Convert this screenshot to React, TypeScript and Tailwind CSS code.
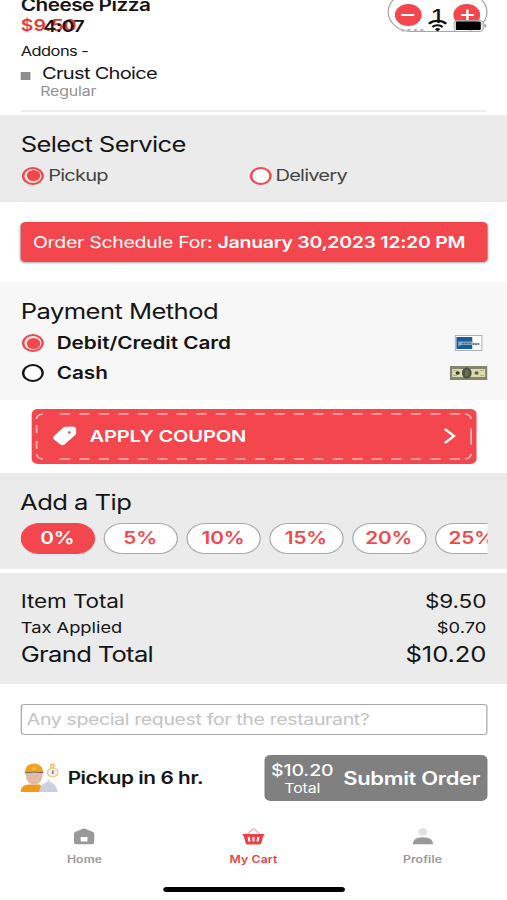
import type { ReactNode } from 'react';

const TIPS = ['0%', '5%', '10%', '15%', '20%', '25%'];

const Radio = ({ checked, dark }: { checked?: boolean; dark?: boolean }) => (
  <span
    className={`ml-px flex h-[18px] w-[18px] shrink-0 items-center justify-center rounded-full border-2 ${
      dark ? 'border-[#151515]' : 'border-[#f4464d]'
    } ${checked ? 'bg-[#fdeaea]' : 'bg-white'}`}
  >
    {checked && <span className="h-[11px] w-[11px] rounded-full bg-[#f4464d]" />}
  </span>
);

const StatusBar = () => (
  <div className="absolute inset-x-0 top-0 h-9">
    <span className="absolute left-[35.500px] top-[16px] text-[16px] font-semibold leading-[20px] tracking-[-0.4px]">4:07</span>
    <svg className="absolute left-[328px] top-[28px]" width="20" height="4" viewBox="0 0 20 4" fill="#b5b5b5">
      <rect x="1" y="1" width="2.500" height="2.500" />
      <rect x="6.300" y="1" width="2.500" height="2.500" />
      <rect x="11.600" y="1" width="2.500" height="2.500" />
      <rect x="16.900" y="1" width="2.500" height="2.500" />
    </svg>
    <svg className="absolute left-[351px] top-[19px]" width="16" height="13" viewBox="0 0 16 13" fill="none" stroke="#0b0b0b" strokeWidth="2">
      <path d="M.9 4.800a10 10 0 0 1 14.200 0" />
      <path d="M3.800 8a6 6 0 0 1 8.400 0" />
      <path d="M8 12.400 5.800 10.200a3.100 3.100 0 0 1 4.400 0Z" fill="#0b0b0b" stroke="none" />
    </svg>
    <svg className="absolute left-[372px] top-[20px]" width="28" height="12" viewBox="0 0 28 12">
      <rect x=".5" y=".5" width="24" height="11" rx="3" fill="#fff" fillOpacity=".5" stroke="#a9a9a9" />
      <rect x="2" y="1.500" width="20.500" height="8.500" rx="1" fill="#000" />
      <path d="M25.500 3.800v4c1-.4 1.500-1.100 1.500-2s-.5-1.600-1.500-2Z" fill="#999" />
    </svg>
  </div>
);

const Stepper = () => (
  <div className="flex h-[40px] w-[82px] items-center justify-between rounded-full border border-[#a5a5a5] px-[4.500px] pt-[6px]">
    <span className="flex h-[22px] w-[22px] items-center justify-center rounded-full bg-[#f4464d]">
      <span className="h-[2px] w-[11px] bg-white" />
    </span>
    <span className="pr-px pt-[2px] text-[19px] font-medium leading-none">1</span>
    <span className="flex h-[22px] w-[22px] items-center justify-center rounded-full bg-[#f4464d]">
      <svg width="11" height="12" viewBox="0 0 11 12" stroke="#fff" strokeWidth="2">
        <path d="M0 6h11M5.500 .5v11" />
      </svg>
    </span>
  </div>
);

const CartItem = () => (
  <div className="flow-root h-[115px] px-[17px]">
    <div className="-mt-1 flex h-[43px] items-start justify-between">
      <div className="font-semibold">
        <div className="h-4 text-[17px] leading-[18px] tracking-[-0.4px]">Cheese Pizza</div>
        <div className="h-[27px] text-[16px] leading-[27px] text-[#ee353c]">$9.50</div>
      </div>
      <div className="-mr-px -mt-1">
        <Stepper />
      </div>
    </div>
    <div className="h-6 text-[13.500px] leading-[25px] tracking-[-0.45px]">Addons -</div>
    <div className="flex h-5 items-center text-[16.500px] tracking-[-0.6px]">
      <span className="mr-[9.500px] mt-[6px] h-[8px] w-[8px] bg-[#8e8e8e]" />
      <span className="pt-px">Crust Choice</span>
    </div>
    <div className="h-[17px] pl-4 text-[13px] leading-[17px] tracking-[-0.1px] text-[#929292]">Regular</div>
    <div className="mt-[10px] h-[2px] bg-[#ececec]" />
  </div>
);

const SelectService = () => (
  <section className="h-[87px] bg-[#ebebeb] px-[17px] pt-[15px]">
    <h2 className="text-[21px] leading-[29px] tracking-[-0.53px]">Select Service</h2>
    <div className="grid h-[33px] grid-cols-2 items-center text-[16.500px] tracking-[-0.650px] text-[#444]">
      <div className="flex items-center gap-[3.500px]">
        <Radio checked />
        <span>Pickup</span>
      </div>
      <div className="-ml-[4.500px] flex items-center gap-[3.500px]">
        <Radio />
        <span>Delivery</span>
      </div>
    </div>
  </section>
);

const AmexCard = () => (
  <svg width="23" height="16" viewBox="0 0 23 16">
    <rect x=".5" y=".5" width="22" height="15" fill="#fff" stroke="#a7b0b5" />
    <path d="M1.500 2h13v12h-13z" fill="#175a9e" />
    <path d="M3 6.500h11.500v3.500H6l-3 1Z" fill="#8facc4" />
    <path d="M6 8.500h8" stroke="#536d82" strokeWidth="1.500" strokeDasharray="2 .6" />
    <path d="M15 9h5.500" stroke="#3c4349" strokeWidth="1.500" strokeDasharray="1.500 .4" />
  </svg>
);

const DollarBill = () => (
  <svg width="31" height="14" viewBox="0 0 31 14">
    <rect width="31" height="14" fill="#85866d" />
    <rect x="2" y="3" width="27" height="8" fill="#dadbb0" />
    <ellipse cx="14" cy="7" rx="4" ry="5.500" fill="#4f5245" />
    <ellipse cx="14" cy="7" rx="1.500" ry="3.500" fill="#6d705c" />
    <circle cx="6.500" cy="7" r="1.700" fill="#343826" />
    <circle cx="22" cy="7" r="1.700" fill="#5d6545" />
    <path d="M3 4.500h3M3 9.500h3M25 4.500h3M25 9.500h3" stroke="#adb17f" />
  </svg>
);

const PaymentRow = ({ label, icon, checked }: { label: string; icon: ReactNode; checked?: boolean }) => (
  <div className="flex h-[30px] items-center text-[17px] font-semibold tracking-[-0.02px]">
    <Radio checked={checked} dark={!checked} />
    <span className="ml-[10.500px] flex-1 pt-[2px]">{label}</span>
    {icon}
  </div>
);

const PaymentMethod = () => (
  <section className="mt-5 h-[118px] bg-[#f7f7f7] px-[17px] pt-[15px]">
    <h2 className="h-[31px] text-[21px] leading-[30px] tracking-[-0.47px]">Payment Method</h2>
    <PaymentRow label="Debit/Credit Card" icon={<span className="mr-[3px]"><AmexCard /></span>} checked />
    <PaymentRow label="Cash" icon={<span className="-mr-px"><DollarBill /></span>} />
  </section>
);

const Coupon = () => (
  <div className="relative mx-[25.500px] mt-[9px] flex h-[55px] items-center rounded-[5px] bg-[#f4464d] pb-px pl-[17.500px] pr-[17px] text-white">
    <svg className="absolute left-[3.500px] top-[4px]" width="359" height="47" viewBox="0 0 359 47" fill="none" stroke="#fbb3b5" strokeWidth="1.500">
      <path d="M13 1h340" strokeDasharray="8.500 7.500" strokeDashoffset="-7" />
      <path d="M13 46h340" strokeDasharray="8.500 7.500" strokeDashoffset="-7" />
      <path d="M1 12v8M1 28v8M357.500 15.500v16M1 6q0-4 5-5M1 41q0 4 5 5M352.500 1q5 1 5 5M352.500 46q5-1 5-5" />
    </svg>
    <svg width="20" height="20" viewBox="0 0 20 20">
      <path
        fillRule="evenodd"
        fill="#fff"
        d="M10.800.7 17 .5q2.300.2 2.500 2.600V7q0 1.300-1 2.200l-8.600 9.400q-1.400 1.300-3 .2L1 13.300q-1.300-1.500 0-3L9 1.600q.8-.8 1.800-.9ZM13.800 5.200a1.200 1.200 0 1 0 0 2.400 1.200 1.200 0 0 0 0-2.400Z"
      />
    </svg>
    <span className="ml-[10.500px] flex-1 text-[16.500px] font-semibold tracking-[-0.15px]">APPLY COUPON</span>
    <svg width="10" height="16" viewBox="0 0 10 16" fill="none" stroke="#fff" strokeWidth="2.300">
      <path d="M1 1l7.500 7L1 15" />
    </svg>
  </div>
);

const Tips = () => (
  <section className="mt-[9px] h-[96px] bg-[#ebebeb] px-[16.500px] pt-[14px]">
    <h2 className="text-[21px] leading-[31px] tracking-[-0.45px]">Add a Tip</h2>
    <div className="mt-[5px] flex gap-[7px] overflow-hidden">
      {TIPS.map((tip, i) => (
        <span
          key={tip}
          className={`flex h-[31px] w-[61px] shrink-0 items-center justify-center rounded-full border pt-px text-[17px] font-semibold tracking-[-0.1px] ${
            i === 0 ? 'border-[#f4464d] bg-[#f4464d] text-white' : 'border-[#a9a9a9] bg-white text-[#f4464d]'
          }`}
        >
          {tip}
        </span>
      ))}
    </div>
  </section>
);

const Totals = () => (
  <section className="mt-1 h-[111px] bg-[#ebebeb] px-[17px] pt-[15px]">
    <div className="flex justify-between text-[18.500px] leading-[27px] tracking-[-0.1px]">
      <span>Item Total</span>
      <span>$9.50</span>
    </div>
    <div className="flex justify-between text-[15px] leading-[25px]">
      <span>Tax Applied</span>
      <span>$0.70</span>
    </div>
    <div className="flex justify-between text-[21px] leading-[30px]">
      <span className="tracking-[-0.570px]">Grand Total</span>
      <span className="tracking-[-0.1px]">$10.20</span>
    </div>
  </section>
);

const ChefIcon = () => (
  <svg width="31" height="30" viewBox="0 0 31 30">
    <path d="M0 29q0-7 6-7.500h10l3 7.500Z" fill="#f09a1a" />
    <path d="M4 10h14q0 11-7 12-7-1-7-12Z" fill="#e5b9a9" />
    <path d="M3.500 9q0-8 7.500-8.500Q18 1 18.500 9q-7.500-2-15 0Z" fill="#f3a01f" />
    <circle cx="11" cy="5.500" r="1.700" fill="#ffc44a" />
    <path d="M3.500 9.500q7.500-1 15 0" stroke="#746b62" strokeWidth="1.600" fill="none" />
    <path d="M15 29q1-9 8-10.500Q29 20 30.500 29Z" fill="#cbd0dc" />
    <circle cx="23" cy="18" r="1.300" fill="#d8dce5" />
    <circle cx="26.300" cy="9.500" r="4.400" fill="#eef0f4" stroke="#edcf84" strokeWidth="1.300" />
    <circle cx="26" cy="2.800" r="1.500" fill="none" stroke="#efb95a" strokeWidth="1.200" />
    <path d="M26.300 7.500v3.500" stroke="#777c8d" strokeWidth="1.300" />
  </svg>
);

const Checkout = () => (
  <div className="px-[16.500px]">
    <div className="mt-5 flex h-[31px] items-center rounded-[3px] border border-[#a8a8a8] pb-px pl-[4.500px] text-[16px] tracking-[-0.3px] text-[#c3c3c3]">
      Any special request for the restaurant?
    </div>
    <div className="mt-5 flex h-[46px] items-center">
      <ChefIcon />
      <span className="ml-[8px] flex-1 pt-px text-[17px] font-semibold tracking-[-0.33px]">Pickup in 6 hr.</span>
      <div className="flex h-[46px] w-[183px] items-center rounded-[5px] bg-[#808080] pl-[6px] pr-[5.500px] text-white">
        <div className="flex w-[51px] flex-col items-center">
          <span className="text-[16px] font-medium leading-[20px] tracking-[-0.1px]">$10.20</span>
          <span className="text-[13px] leading-[17px] tracking-[-0.1px]">Total</span>
        </div>
        <span className="ml-auto text-[18px] font-semibold tracking-[-0.25px]">Submit Order</span>
      </div>
    </div>
  </div>
);

const HomeIcon = () => (
  <svg width="18" height="17" viewBox="0 0 18 17" fill="#999">
    <path fillRule="evenodd" d="M8 .7q1-.5 2 0l6.300 3.300q1 .5 1 1.800v8.500q0 2-1.800 2h-13q-1.800 0-1.800-2V5.800Q.7 4.500 1.700 4ZM6.200 9v4.500h5.600V9Z" />
  </svg>
);

const CartIcon = () => (
  <svg width="18" height="17" viewBox="0 0 18 17">
    <path d="M4 6.500 8 1.500q1-1 2 0l4 5" fill="none" stroke="#f9b6b9" strokeWidth="1.300" />
    <path d="M0 6h18v1.800h-1l-1.400 7q-.3 1.700-1.900 1.700H4.300q-1.600 0-1.900-1.700L1 7.800H0Z" fill="#ed3f46" />
    <path d="m5 9 .7 4.500M9 9v4.500M13 9l-.7 4.500" stroke="#fff" strokeWidth="1.700" />
  </svg>
);

const ProfileIcon = () => (
  <svg width="18" height="17" viewBox="0 0 18 17">
    <circle cx="9" cy="4" r="3.800" fill="#e1e1e1" />
    <path d="M.6 16.300q0-7 8.400-7t8.400 7Z" fill="#999" />
  </svg>
);

const Tab = ({ icon, label, active }: { icon: ReactNode; label: string; active?: boolean }) => (
  <div
    className={`flex flex-1 flex-col items-center text-[10px] font-semibold leading-[14px] tracking-[0.1px] ${
      active ? 'text-[#ed3f46]' : 'text-[#999]'
    }`}
  >
    {icon}
    <span className="mt-[7px]">{label}</span>
  </div>
);

export default function App() {
  return (
    <div className="h-[900px] w-[507px] overflow-hidden bg-white">
      <div className="relative h-[900px] w-[416px] origin-top-left scale-x-[1.21875] overflow-hidden whitespace-nowrap font-['Inter',sans-serif] text-[#151515]">
        <CartItem />
        <StatusBar />
        <SelectService />
        <div className="mx-[16.500px] mt-5 flex h-10 items-center rounded-[4px] bg-[#f4464d] pl-[10.500px] text-[16px] tracking-[-0.240px] text-white shadow-[0_1px_2px_rgba(0,0,0,0.35)]">
          <span>
            Order Schedule For: <b className="font-semibold">January 30,2023 12:20 PM</b>
          </span>
        </div>
        <PaymentMethod />
        <Coupon />
        <Tips />
        <Totals />
        <Checkout />
        <nav className="mt-[27px] flex">
          <Tab icon={<HomeIcon />} label="Home" />
          <Tab icon={<CartIcon />} label="My Cart" active />
          <Tab icon={<ProfileIcon />} label="Profile" />
        </nav>
        <div className="mx-auto mt-[21px] h-[5px] w-[149px] rounded-full bg-black" />
      </div>
    </div>
  );
}
